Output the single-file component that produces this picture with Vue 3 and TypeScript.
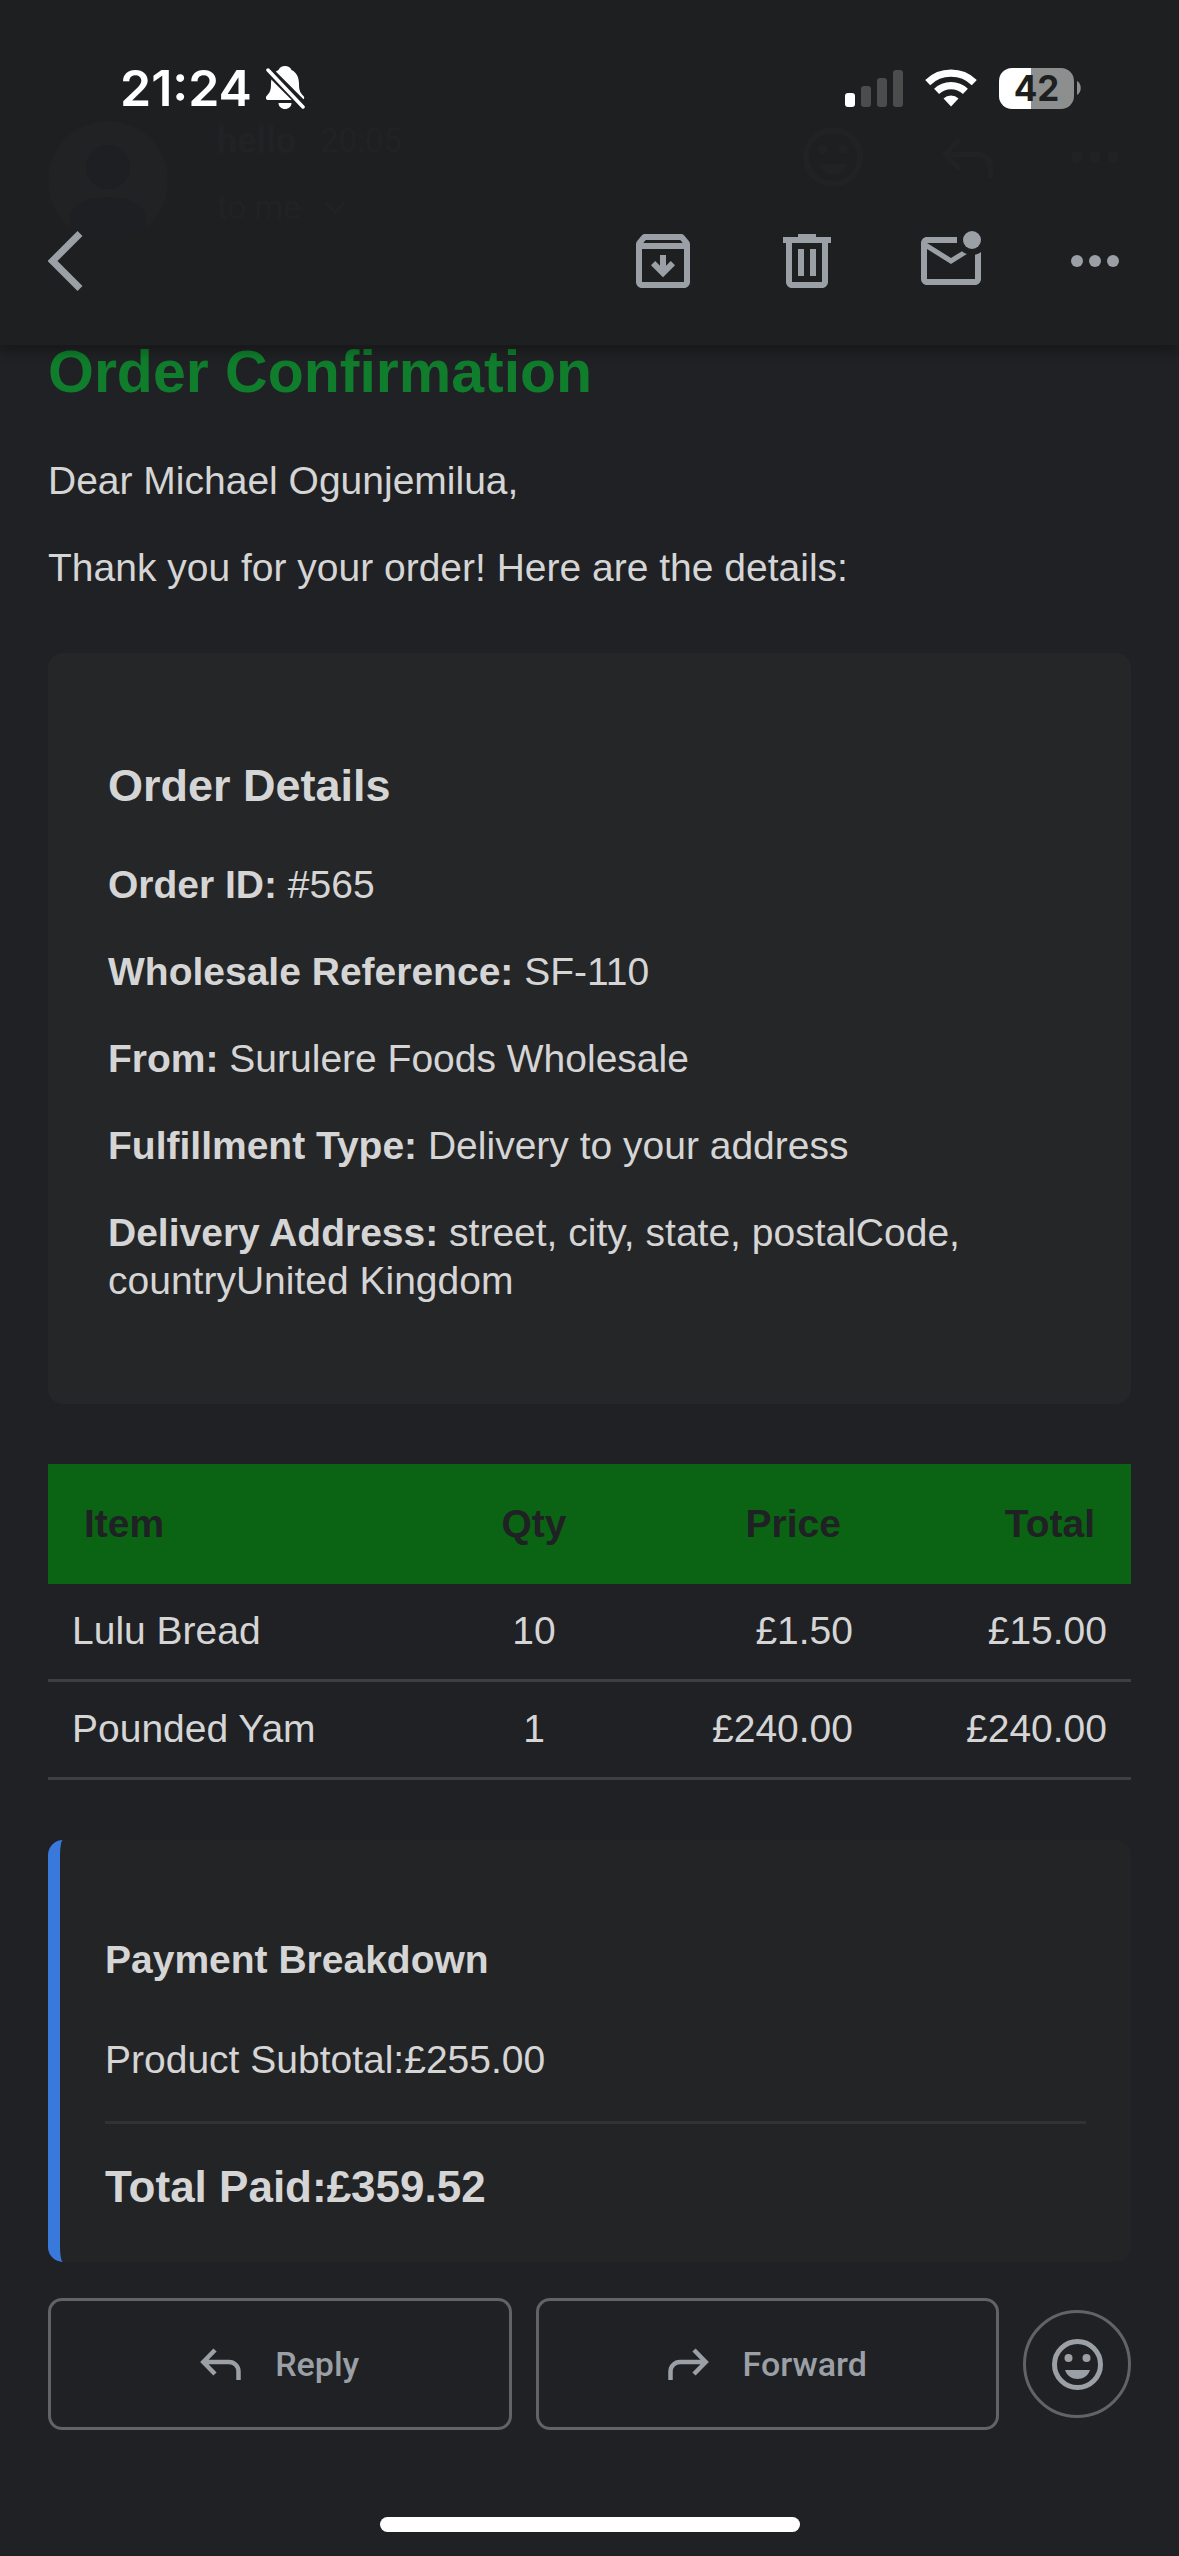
<script setup lang="ts">
interface Detail {
  label: string
  value: string
}

interface OrderLine {
  item: string
  qty: number
  price: string
  total: string
}

const details: Detail[] = [
  { label: 'Order ID:', value: '#565' },
  { label: 'Wholesale Reference:', value: 'SF-110' },
  { label: 'From:', value: 'Surulere Foods Wholesale' },
  { label: 'Fulfillment Type:', value: 'Delivery to your address' },
  { label: 'Delivery Address:', value: 'street, city, state, postalCode, countryUnited Kingdom' },
]

const lines: OrderLine[] = [
  { item: 'Lulu Bread', qty: 10, price: '£1.50', total: '£15.00' },
  { item: 'Pounded Yam', qty: 1, price: '£240.00', total: '£240.00' },
]
</script>

<template>
  <div class="screen">
    <header class="top">
      <!-- message header, dimmed beneath the bar -->
      <div class="under" aria-hidden="true">
        <svg class="avatar" viewBox="0 0 120 120">
          <defs><clipPath id="disc"><circle cx="60" cy="60" r="60" /></clipPath></defs>
          <circle cx="60" cy="60" r="60" fill="#212224" />
          <g clip-path="url(#disc)" fill="#1e1f23">
            <circle cx="60" cy="46" r="22" />
            <path d="M22 100c0-16 16-24 38-24s38 8 38 24v20H22z" />
          </g>
        </svg>
        <div class="sender">
          <div class="sender-line"><b>hello</b><span>20:05</span></div>
          <div class="sender-line">
            <span>to me</span>
            <svg width="20" height="12" viewBox="0 0 20 12"><path d="M1 1l9 9 9-9" fill="none" stroke="currentColor" stroke-width="3" /></svg>
          </div>
        </div>
        <div class="under-icons">
          <svg width="60" height="60" viewBox="0 0 51 51">
            <circle cx="25.5" cy="25.5" r="23" fill="none" stroke="currentColor" stroke-width="5" />
            <circle cx="17" cy="19" r="4" fill="currentColor" /><circle cx="34" cy="19" r="4" fill="currentColor" />
            <path d="M13 31h25c-2 6-7 9-12.500 9s-10.500-3-12.500-9z" fill="currentColor" />
          </svg>
          <svg width="54" height="42" viewBox="0 0 41 32"><path d="M15 2.500 3.500 14 15 25.500M4 14h25a9.500 9.500 0 0 1 9.500 9.500V32" fill="none" stroke="currentColor" stroke-width="4" /></svg>
          <svg width="48" height="12" viewBox="0 0 48 12" fill="currentColor"><circle cx="6" cy="6" r="6" /><circle cx="24" cy="6" r="6" /><circle cx="42" cy="6" r="6" /></svg>
        </div>
      </div>

      <div class="status">
        <div class="clock">
          <time>21:24</time>
          <svg width="40" height="44" viewBox="0 0 40 44" role="img" aria-label="Silent mode">
            <path d="M19 0c3 0 5.500 1.500 6.500 4 5.500 2.500 7.500 8 7.500 14 0 7 1.500 9 4.500 12 1.500 2 .5 4-2 4h-33c-2.500 0-3.500-2-2-4 3-3 4.500-5 4.500-12 0-6 2-11.500 7.500-14 1-2.500 3.500-4 6.500-4z" fill="#fff" />
            <path d="M12.500 37h13c0 3.500-3 6-6.500 6s-6.500-2.500-6.500-6z" fill="#fff" />
            <path d="M-2 0 41 43" stroke="#1e1f21" stroke-width="9" />
            <path d="M2 4 37 41" stroke="#fff" stroke-width="3.500" stroke-linecap="round" />
          </svg>
        </div>
        <div class="system">
          <svg width="58" height="37" viewBox="0 0 58 37" role="img" aria-label="Signal">
            <rect y="23" width="10" height="14" rx="3" fill="#fff" />
            <g fill="#4b4c4c">
              <rect x="16" y="16" width="10" height="21" rx="3" />
              <rect x="32" y="8" width="10" height="29" rx="3" />
              <rect x="48" width="10" height="37" rx="3" />
            </g>
          </svg>
          <svg width="52" height="38" viewBox="0 0 52 38" role="img" aria-label="Wi-Fi">
            <g fill="none" stroke="#fff" stroke-width="7.200">
              <path d="M2.700 13.600a33.500 33.500 0 0 1 46.600 0" />
              <path d="M11.600 22.400a21 21 0 0 1 28.800 0" />
            </g>
            <path d="M26 37.500 18.500 29.600a10.700 10.700 0 0 1 15 0z" fill="#fff" />
          </svg>
          <div class="battery">
            <span class="charge">42</span>
            <svg width="4" height="14" viewBox="0 0 4 14"><path d="M0 0c5 2.500 5 11.500 0 14z" fill="#8d8f8e" /></svg>
          </div>
        </div>
      </div>

      <nav class="toolbar">
        <button class="tool back" type="button" aria-label="Back">
          <svg width="36" height="60" viewBox="0 0 36 60"><path d="M32 2.500 4.500 30 32 57.500" fill="none" stroke="currentColor" stroke-width="7" /></svg>
        </button>
        <div class="tools">
          <button class="tool" type="button" aria-label="Archive">
            <svg width="72" height="72" viewBox="0 0 24 24" fill="currentColor"><path d="M20.540 5.230l-1.390-1.680C18.880 3.210 18.470 3 18 3H6c-.47 0-.88.21-1.160.55L3.460 5.230C3.170 5.570 3 6.020 3 6.500V19c0 1.100.9 2 2 2h14c1.100 0 2-.9 2-2V6.500c0-.48-.17-.93-.46-1.270zM6.240 5h11.520l.83 1H5.420l.82-1zM5 19V8h14v11H5z" /><path d="M11 10h2v3.600l1.600-1.600 1.400 1.400-4 4-4-4L9.400 12l1.600 1.600z" /></svg>
          </button>
          <button class="tool" type="button" aria-label="Delete">
            <svg width="72" height="72" viewBox="0 0 24 24" fill="currentColor"><path d="M15 4V3H9v1H4v2h1v13c0 1.100.9 2 2 2h10c1.100 0 2-.9 2-2V6h1V4h-5zm2 15H7V6h10v13zM9 8h2v9H9zM13 8h2v9h-2z" /></svg>
          </button>
          <button class="tool" type="button" aria-label="Mark as unread">
            <svg width="72" height="72" viewBox="0 0 24 24" fill="currentColor"><path d="M22 8.980V18c0 1.100-.9 2-2 2H4c-1.100 0-2-.9-2-2V6c0-1.100.9-2 2-2h10v2H4l8 5 3.670-2.290c.47.43 1.020.76 1.630.98L12 13 4 8v10h16V9.900c.74-.15 1.420-.48 2-.92z" /><circle cx="19" cy="5" r="3" /></svg>
          </button>
          <button class="tool" type="button" aria-label="More options">
            <svg width="72" height="72" viewBox="0 0 24 24" fill="currentColor"><circle cx="6" cy="12" r="2" /><circle cx="12" cy="12" r="2" /><circle cx="18" cy="12" r="2" /></svg>
          </button>
        </div>
      </nav>
    </header>

    <main class="mail">
      <h1>Order Confirmation</h1>
      <p>Dear Michael Ogunjemilua,</p>
      <p>Thank you for your order! Here are the details:</p>

      <section class="details">
        <h2>Order Details</h2>
        <p v-for="d in details" :key="d.label"><strong>{{ d.label }}</strong> {{ d.value }}</p>
      </section>

      <table>
        <colgroup><col /><col class="c-qty" /><col class="c-price" /><col class="c-total" /></colgroup>
        <thead>
          <tr><th scope="col">Item</th><th scope="col" class="mid">Qty</th><th scope="col" class="end">Price</th><th scope="col" class="end">Total</th></tr>
        </thead>
        <tbody>
          <tr v-for="l in lines" :key="l.item">
            <td>{{ l.item }}</td><td class="mid">{{ l.qty }}</td><td class="end">{{ l.price }}</td><td class="end">{{ l.total }}</td>
          </tr>
        </tbody>
      </table>

      <section class="payment">
        <h3>Payment Breakdown</h3>
        <div class="sum"><span>Product Subtotal:</span><span>£255.00</span></div>
        <div class="sum grand"><span>Total Paid:</span><span>£359.52</span></div>
      </section>
    </main>

    <footer class="bottom">
      <div class="actions">
        <button class="action" type="button">
          <svg width="41" height="32" viewBox="0 0 41 32"><path d="M15 2 3.300 14 15 26M4 14h25a9.500 9.500 0 0 1 9.500 9.500V32" fill="none" stroke="currentColor" stroke-width="4.500" /></svg>
          Reply
        </button>
        <button class="action" type="button">
          <svg width="41" height="32" viewBox="0 0 41 32"><path d="M26 2 37.700 14 26 26M37 14H12a9.500 9.500 0 0 0-9.500 9.500V32" fill="none" stroke="currentColor" stroke-width="4.500" /></svg>
          Forward
        </button>
        <button class="react" type="button" aria-label="Add reaction">
          <svg width="51" height="51" viewBox="0 0 51 51">
            <circle cx="25.500" cy="25.500" r="23" fill="none" stroke="currentColor" stroke-width="5" />
            <circle cx="16.500" cy="19" r="4" fill="currentColor" /><circle cx="34.500" cy="19" r="4" fill="currentColor" />
            <path d="M13 31h25c-2 6-7 9-12.500 9s-10.500-3-12.500-9z" fill="currentColor" />
          </svg>
        </button>
      </div>
      <div class="home"></div>
    </footer>
  </div>
</template>

<style>
body {
  margin: 0;
  background: #202124;
}
</style>

<style scoped>
.screen {
  display: flex;
  flex-direction: column;
  min-height: 100vh;
  background: #202124;
  color: #d5d5d5;
  font: 39px/48px "Liberation Sans", Arial, sans-serif;
}

button {
  padding: 0;
  border: 0;
  background: none;
  color: #9aa0a6;
}

svg {
  display: block;
  flex: none;
}

.top {
  position: relative;
  z-index: 1;
  background: #1e1f21;
  box-shadow: 0 6px 12px rgba(0, 0, 0, 0.3);
}

.under {
  position: absolute;
  inset: 121px 60px auto 48px;
  display: flex;
  gap: 49px;
  color: #212224;
  font: 33px/40px Roboto, sans-serif;
}

.avatar {
  width: 120px;
  height: 120px;
}

.sender {
  display: flex;
  flex: 1;
  flex-direction: column;
  gap: 27px;
}

.sender-line {
  display: flex;
  align-items: center;
  gap: 24px;
}

.sender b {
  font-size: 36px;
}

.under-icons {
  display: flex;
  align-items: center;
  gap: 77px;
  height: 72px;
}

.status {
  position: relative;
  display: flex;
  align-items: center;
  justify-content: space-between;
  height: 176px;
  padding: 0 98px 0 120px;
  color: #fff;
}

.clock {
  display: flex;
  align-items: center;
  gap: 14px;
  font: 600 50px/60px Inter, sans-serif;
}

.system {
  display: flex;
  align-items: center;
  gap: 22px;
}

.battery {
  display: flex;
  align-items: center;
  gap: 3px;
}

.charge {
  width: 75px;
  border-radius: 13px;
  background: linear-gradient(90deg, #fff 32px, #8d8f8e 32px);
  color: #1e1f21;
  font: 700 35px/41px Inter, sans-serif;
  text-align: center;
}

.toolbar {
  position: relative;
  display: flex;
  align-items: center;
  justify-content: space-between;
  height: 169px;
  padding: 0 48px;
}

.tools {
  display: flex;
  gap: 72px;
}

.mail {
  padding: 0 48px;
}

h1 {
  margin: 0 0 58px;
  color: #0f7d2c;
  font-size: 59px;
  line-height: 54px;
}

p {
  margin: 0 0 39px;
}

.details {
  display: flow-root;
  margin: 61px 0 60px;
  padding: 60px;
  border-radius: 15px;
  background: #252628;
}

h2 {
  margin: 44px 0 47px;
  font-size: 45px;
  line-height: 57px;
}

table {
  width: 100%;
  border-spacing: 0;
  table-layout: fixed;
}

.c-qty {
  width: 242px;
}

.c-price {
  width: 222px;
}

.c-total {
  width: 254px;
}

th {
  padding: 36px;
  background: #0b6413;
  color: #202124;
  text-align: left;
}

td {
  padding: 23px 24px 24px;
  border-bottom: 3px solid #3f3f43;
}

.mid {
  text-align: center;
}

.end {
  text-align: right;
}

.payment {
  margin-top: 60px;
  padding: 45px;
  border-left: 12px solid #3a79dc;
  border-radius: 15px;
  background: #232426;
}

h3 {
  margin: 51px 0 52px;
  font-size: 39px;
}

.sum {
  display: flex;
}

.grand {
  margin-top: 37px;
  padding: 39px 0 6px;
  border-top: 3px solid #303234;
  font-size: 44px;
  font-weight: 700;
}

.bottom {
  display: flex;
  flex: 1;
  flex-direction: column;
  align-items: center;
  justify-content: space-between;
  padding: 36px 48px 24px;
}

.actions {
  display: flex;
  align-items: center;
  gap: 24px;
  width: 100%;
}

.action {
  display: flex;
  flex: 1;
  align-items: center;
  justify-content: center;
  gap: 34px;
  height: 132px;
  border: 3px solid #626367;
  border-radius: 14px;
  font: 500 34px/40px Roboto, sans-serif;
}

.react {
  display: flex;
  align-items: center;
  justify-content: center;
  width: 108px;
  height: 108px;
  border: 3px solid #626367;
  border-radius: 50%;
}

.home {
  width: 420px;
  height: 15px;
  border-radius: 8px;
  background: #fff;
}
</style>
